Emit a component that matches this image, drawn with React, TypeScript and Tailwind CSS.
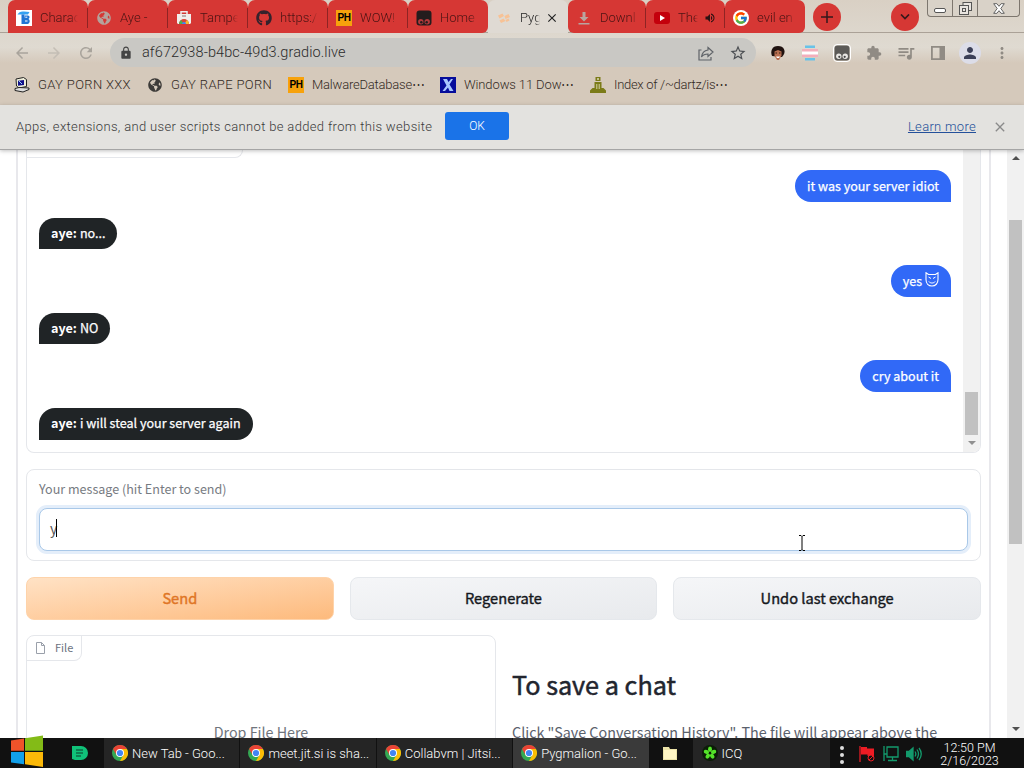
import type { ReactNode } from 'react';
import clsx from 'clsx';
import { FcGoogle } from 'react-icons/fc';
import { FaGithub, FaGlobeAmericas } from 'react-icons/fa';
import {
  MdArrowBack,
  MdArrowForward,
  MdClose,
  MdExtension,
  MdLock,
  MdMoreVert,
  MdPerson,
  MdQueueMusic,
  MdRefresh,
  MdStarBorder,
  MdVolumeUp,
} from 'react-icons/md';

const PhIcon = () => (
  <span className="flex size-4 shrink-0 items-center justify-center bg-[#f7a20c] font-['Liberation_Sans'] text-[10px] leading-none font-bold tracking-[-0.5px] text-black">
    PH
  </span>
);

const CharaIcon = () => (
  <svg className="size-4 shrink-0" viewBox="0 0 16 16">
    <rect width="16" height="16" fill="#fff" />
    <path d="M1.500 4.500C3 2 5 1 8 1.500l5.500.5L12 4.500H4z" fill="#35a2f2" />
    <path d="M5.500 4.500h3V14H5.500zM9 5.500h3c2 .5 2 2.500.5 3.500 2 1 1.500 4.500-1 5H7.500z" fill="#2074d4" />
    <path d="M9.300 7.200h2M9 11h2.500" stroke="#fff" />
  </svg>
);

const StoreIcon = () => (
  <svg className="size-4 shrink-0" viewBox="0 0 16 16">
    <path d="M1 4h14v9l-1 1H2l-1-1z" fill="#f1eeec" />
    <path d="M5 4V1.800h6V4" fill="none" stroke="#eee" strokeWidth="1.500" />
    <path d="M6 6h4" stroke="#a99" strokeWidth="1.500" />
    <path d="M3 14a5 5 0 0 1 10 0z" fill="#db4437" />
    <path d="M3 14a5 5 0 0 1 2-4l3 4z" fill="#4caf50" />
    <path d="M13 14a5 5 0 0 0-2-4l-3 4z" fill="#f5b92b" />
    <path d="M6 14a2 2 0 0 1 4 0z" fill="#4285f4" />
  </svg>
);

const MonkeyIcon = ({ className }: { className?: string }) => (
  <svg className={clsx('size-4 shrink-0', className)} viewBox="0 0 16 16">
    <rect x="0.500" y="0.500" width="15" height="15" rx="3" fill="currentColor" />
    <circle cx="4.800" cy="11.300" r="2.700" fill="#e8e6e2" />
    <circle cx="11.200" cy="11.300" r="2.700" fill="#e8e6e2" />
    <circle cx="5.300" cy="11.800" r="1.100" fill="#444" />
    <circle cx="10.700" cy="11.800" r="1.100" fill="#444" />
  </svg>
);

const HomeIcon = () => (
  <svg className="size-4 shrink-0" viewBox="0 0 16 16">
    <rect x="0.500" y="0.500" width="15" height="15" rx="3" fill="#241c1d" />
    <circle cx="4.800" cy="11.800" r="2.700" fill="#b3393b" />
    <circle cx="11.200" cy="11.800" r="2.700" fill="#b3393b" />
    <circle cx="5.300" cy="12.200" r="1.200" fill="#241c1d" />
    <circle cx="10.700" cy="12.200" r="1.200" fill="#241c1d" />
  </svg>
);

const GradioIcon = () => (
  <svg className="size-4 shrink-0" viewBox="0 0 16 16" fill="#f7c296">
    <path d="M2 5.500 6.500 3.500 8 6 3.500 8.500zM8.500 6 12.500 4 14 7l-4.500 2zM3.500 10.500 7.500 8.500 9.500 11 5 13zM9.500 10l3-1.500 1 2-3 1.500z" />
  </svg>
);

const DownloadIcon = () => (
  <svg className="size-4 shrink-0" viewBox="0 0 16 16" fill="#b9a49f">
    <path d="M6.500 2h3v5h3L8 11.500 3.500 7h3zM2.500 13h11v1.500h-11z" />
  </svg>
);

const YoutubeIcon = () => (
  <svg className="size-4 shrink-0" viewBox="0 0 16 16">
    <rect y="2" width="16" height="12" rx="3" fill="#c4000c" />
    <path d="M6 5v6l5-3z" fill="#fff" />
  </svg>
);

const GoogleBadge = () => (
  <span className="flex size-4 shrink-0 items-center justify-center rounded-full bg-white">
    <FcGoogle className="size-3.5" />
  </span>
);

const PcIcon = () => (
  <svg className="size-4 shrink-0" viewBox="0 0 16 16">
    <path d="M2 2 9.500.5l3 2v7L5 11 2.500 9z" fill="#eeeeda" stroke="#222" />
    <path d="M4 3.800 10 3v5l-6 .8z" fill="#11118a" />
    <path d="m5 4 3 3" stroke="#9cf" />
    <path d="m1 11.500 4-1 10 .5v1.500l-6 2.500-8-1.500z" fill="#ddd" stroke="#222" />
  </svg>
);

const XIcon = () => (
  <svg className="size-4 shrink-0" viewBox="0 0 16 16">
    <rect width="16" height="16" fill="#050c9b" />
    <path d="M3 2h4l1.500 3L11 2h2L9.500 7.500 13.500 14h-4L8 10.500 5 14H2.500L6.500 8.500z" fill="#a6c5ff" />
  </svg>
);

const PeopleIcon = () => (
  <svg className="size-4 shrink-0" viewBox="0 0 16 16" fill="#7b7b18">
    <path d="M5.500 0h5v4h-5zM4.500 5h7v6h-7zM0 16v-2.500L2.500 11h11l2.500 2.500V16z" />
    <path d="M7 1.200h2v1.600H7z" fill="#ddd8b8" />
    <path d="M6.300 7h1v5h-1zM8.700 7h1v5h-1z" fill="#d5d2a4" />
  </svg>
);

const FaceIcon = () => (
  <svg className="size-4 shrink-0" viewBox="0 0 16 16">
    <path d="M2 11C0 6 2 1 8 1s8 5 5.500 9L12 12z" fill="#201310" />
    <path d="M4.500 6.500 8 5l3.500 1.500v4L9 15H7l-2.500-4z" fill="#b86f51" />
    <path d="M6 11.500h4l-1 1.500H7z" fill="#fff" />
    <path d="M5.500 8h1.500m2 0h1.500" stroke="#321" />
  </svg>
);

const FlagIcon = () => (
  <svg className="size-4 shrink-0" viewBox="0 0 16 16">
    <path d="M3 .5h10V3H3zM3 13h10v2.500H3z" fill="#69c2e8" />
    <path d="M0 4h16v3H0zM0 9h16v3H0z" fill="#f3aebb" />
    <path d="M0 6.500h16v3H0z" fill="#fff" />
  </svg>
);

const ShareIcon = () => (
  <svg className="size-4 shrink-0" viewBox="0 0 16 16" fill="none" stroke="#5f6368" strokeWidth="1.200">
    <path d="M3.500 5H1v10h12v-3" />
    <path d="M10 2.500 15 7l-5 4.500V9c-3 0-5 .8-6.500 3C4 8 6.500 5.500 10 5z" />
  </svg>
);

const SidePanelIcon = () => (
  <svg className="size-4 shrink-0" viewBox="0 0 16 16" fill="#908b84">
    <path d="M1 1h14v14H1zm1.800 1.800v10.400H9.500V2.800z" fillRule="evenodd" />
  </svg>
);

const ChromeIcon = () => (
  <svg className="size-4 shrink-0" viewBox="0 0 16 16">
    <circle cx="8" cy="8" r="8" fill="#34a853" />
    <path d="M1.070 4A8 8 0 0 1 14.930 4H8L4.540 10z" fill="#ea4335" />
    <path d="M14.930 4A8 8 0 0 1 8 16l3.460-6L8 4z" fill="#fbbc05" />
    <circle cx="8" cy="8" r="4" fill="#fff" />
    <circle cx="8" cy="8" r="3.100" fill="#4285f4" />
  </svg>
);

const DevilIcon = () => (
  <svg className="-mt-[3px] h-[15px] w-[14px]" viewBox="0 0 14 15" fill="none" stroke="#fff">
    <path d="M1 .8 3.500 2.500h7L13 .8v6.700c0 4-2.500 6.500-6 6.500S1 11.500 1 7.500z" strokeWidth="1.100" />
    <path d="m3.500 5 2.500 1.500M10.500 5 8 6.500M3.800 9.500c1.500 2 5 2 6.400 0" />
  </svg>
);

type Tab = { title: string; icon: ReactNode; active?: boolean; audio?: boolean; width: string };

const tabs: Tab[] = [
  { title: 'Charac', icon: <CharaIcon />, width: 'w-20' },
  { title: 'Aye - ', icon: <FaGlobeAmericas className="size-3.5 shrink-0 text-[#b5a29c]" />, width: 'w-20' },
  { title: 'Tampe', icon: <StoreIcon />, width: 'w-20' },
  { title: 'https:/', icon: <FaGithub className="size-4 shrink-0 text-[#34222c]" />, width: 'w-20' },
  { title: 'WOW!', icon: <PhIcon />, width: 'w-20' },
  { title: 'Home', icon: <HomeIcon />, width: 'w-20' },
  { title: 'Pyg', icon: <GradioIcon />, active: true, width: 'w-20' },
  { title: 'Downl', icon: <DownloadIcon />, width: 'w-[78px]' },
  { title: 'The', icon: <YoutubeIcon />, audio: true, width: 'w-[79px]' },
  { title: 'evil en', icon: <GoogleBadge />, width: 'w-20' },
];

const bookmarks = [
  { title: 'GAY PORN XXX', icon: <PcIcon />, width: 'w-[133px]', tracking: 'tracking-[0.35px]' },
  { title: 'GAY RAPE PORN', icon: <FaGlobeAmericas className="size-3.5 shrink-0 text-[#3d3b39]" />, width: 'w-[141px]', tracking: 'tracking-[0.35px]' },
  { title: 'MalwareDatabase⋯', icon: <PhIcon />, width: 'w-[152px]', tracking: 'tracking-[-0.2px]' },
  { title: 'Windows 11 Dow⋯', icon: <XIcon />, width: 'w-[150px]', tracking: 'tracking-[-0.12px]' },
  { title: 'Index of /~dartz/is⋯', icon: <PeopleIcon />, width: 'w-[150px]', tracking: 'tracking-[-0.3px]' },
];

const messages = [
  { from: 'user', text: 'it was your server idiot' },
  { from: 'aye', text: 'no...' },
  { from: 'user', text: 'yes', devil: true },
  { from: 'aye', text: 'NO' },
  { from: 'user', text: 'cry about it' },
  { from: 'aye', text: 'i will steal your server again' },
];

const tasks = [
  { title: 'New Tab - Goo...', active: false },
  { title: 'meet.jit.si is sha...', active: false },
  { title: 'Collabvm | Jitsi...', active: false },
  { title: 'Pygmalion - Go...', active: true },
];

const TabStrip = () => (
  <div className="relative flex h-[33px] border-b border-[#aaa197] pl-2">
    {tabs.map((tab, i) => (
      <div
        key={tab.title}
        className={clsx(
          'relative flex h-[33px] shrink-0 items-center rounded-t-[7px] pt-0.5 pr-2 pl-2 text-[13px]',
          tab.width,
          tab.active ? 'bg-[#dfdad3] text-[#222]' : 'bg-[#d63734] text-[#4a1414]',
          (i === 5 || i === 9) && 'rounded-br-[6px]',
          i === 7 && 'rounded-bl-[6px]'
        )}
      >
        <span className="flex w-4 shrink-0 justify-center">{tab.icon}</span>
        <span
          className={clsx(
            'ml-2 overflow-hidden mask-r-from-80% whitespace-pre',
            tab.active || tab.audio ? 'w-[20px]' : 'w-[38px]'
          )}
        >
          {tab.title}
        </span>
        {tab.active && <MdClose className="ml-[5px] size-3.5 shrink-0 text-[#222]" />}
        {tab.audio && <MdVolumeUp className="ml-1.5 size-3 shrink-0 text-[#2c1213]" />}
        {![5, 6, 9].includes(i) && <span className="absolute top-2 right-0 h-5 w-px bg-[#8e2424]" />}
      </div>
    ))}
    <button className="mt-[3px] ml-2 flex size-7 items-center justify-center rounded-full bg-[#d63734]">
      <svg className="size-3" viewBox="0 0 12 12" stroke="#35191b" strokeWidth="1.500">
        <path d="M6 0v12M0 6h12" />
      </svg>
    </button>
    <button className="mt-[3px] ml-[50px] flex size-7 items-center justify-center rounded-full bg-[#d63734]">
      <svg className="h-1.5 w-2.5" viewBox="0 0 10 6" fill="none" stroke="#35191b" strokeWidth="1.700">
        <path d="m1 .5 4 4 4-4" />
      </svg>
    </button>
    <div className="ml-[8px] flex h-[17px] w-[93px] rounded-b-[4px] border border-t-0 border-[#7d766e] bg-[#d9d2c8]">
      <span className="flex w-[25px] justify-center border-r border-[#7d766e] pt-2">
        <span className="h-[5px] w-3 rounded-[2px] border border-[#555] bg-white" />
      </span>
      <span className="flex w-[25px] items-center justify-center border-r border-[#7d766e]">
        <svg className="size-[13px]" viewBox="0 0 13 13" fill="#e8e4df" stroke="#555">
          <rect x="4" y="0.500" width="8.500" height="8" />
          <rect x="0.500" y="3.500" width="9" height="9" />
          <rect x="3.500" y="6.500" width="3" height="3" />
        </svg>
      </span>
      <span className="flex flex-1 items-center justify-center">
        <svg className="h-[11px] w-3" viewBox="0 0 12 11" fill="#fff" stroke="#555" strokeWidth="0.900">
          <path d="M.7.7h3.200L6 3.300 8.100.7h3.200L7.800 5.500l3.500 4.800H8.100L6 7.700l-2.100 2.600H.7l3.500-4.800z" />
        </svg>
      </span>
    </div>
  </div>
);

const Toolbar = () => (
  <div className="flex h-[39px] items-center pl-[13px]">
    <MdArrowBack className="size-[18px] text-[#a9a49c]" />
    <MdArrowForward className="ml-[14px] size-[18px] text-[#c4beb5]" />
    <MdRefresh className="ml-[14px] size-[18px] text-[#a9a49c]" />
    <div className="ml-[15px] flex h-[29px] w-[646px] items-center rounded-full bg-[#c9c8c4] pr-[9px] pl-[9px]">
      <MdLock className="size-3.5 text-[#444]" />
      <span className="ml-[9px] text-[14.500px] tracking-[0.1px] text-[#2b2b2b]">af672938-b4bc-49d3.gradio.live</span>
      <span className="ml-auto flex items-center gap-[15px]">
        <ShareIcon />
        <MdStarBorder className="size-[18px] text-[#4c4f53]" />
      </span>
    </div>
    <div className="ml-[14px] flex items-center gap-4">
      <FaceIcon />
      <FlagIcon />
      <span className="-mx-px rounded-[4px] border border-white">
        <MonkeyIcon className="text-[#5c5a57]" />
      </span>
      <MdExtension className="size-4 text-[#908b84]" />
      <MdQueueMusic className="-mx-0.5 size-5 text-[#908b84]" />
      <SidePanelIcon />
      <span className="-mx-[3px] flex size-[22px] items-center justify-center rounded-full bg-[#dcdde8]">
        <MdPerson className="size-[18px] text-[#3c4058]" />
      </span>
      <MdMoreVert className="-mx-px size-[18px] text-[#908b84]" />
    </div>
  </div>
);

const Bookmarks = () => (
  <div className="flex h-[33px] items-center pb-[7px] pl-[14px] text-[13px] text-[#33291f]">
    {bookmarks.map((b) => (
      <div key={b.title} className={clsx('flex shrink-0 items-center whitespace-nowrap', b.width)}>
        <span className="flex w-4 justify-center">{b.icon}</span>
        <span className={clsx('ml-2', b.tracking)}>{b.title}</span>
      </div>
    ))}
  </div>
);

const InfoBar = () => (
  <div className="relative z-10 flex h-[45px] items-center border-b border-[#a5a5a5] bg-[#e3e2df] pl-4 shadow-[0_1px_4px_rgba(0,0,0,0.25)]">
    <span className="w-[429px] text-[13px] tracking-[0.34px] whitespace-nowrap text-[#3a3a3a]">
      Apps, extensions, and user scripts cannot be added from this website
    </span>
    <button className="-mt-0.5 h-7 w-16 rounded-[3px] bg-[#1a73e8] text-[12px] text-white">OK</button>
    <a className="ml-auto text-[13px] tracking-[0.3px] text-[#24509a] underline">Learn more</a>
    <MdClose className="mr-4 ml-4 size-4 text-[#8a8a8a]" />
  </div>
);

const Chat = () => (
  <div className="relative flex h-[303px] rounded-b-[8px] border border-t-0 border-[#e5e7eb] bg-white">
    <span className="absolute top-0 left-0 h-2 w-[216px] rounded-br-[8px] border-r border-b border-[#e5e7eb]" />
    <div className="flex flex-1 flex-col gap-4 pt-[20px] pr-3 pl-3 text-[12.560px]">
      {messages.map((m) => (
        <div
          key={m.text}
          className={clsx(
            'flex h-[31.600px] items-center gap-[3px] rounded-[16px] px-3 leading-none text-white [-webkit-text-stroke:0.25px_white]',
            m.from === 'user' ? 'self-end rounded-br-none bg-[#3169f7]' : 'self-start rounded-bl-none bg-[#202426]'
          )}
        >
          {m.from === 'aye' && <b className="[-webkit-text-stroke:0]">aye:</b>}
          <span>{m.text}</span>
          {m.devil && <DevilIcon />}
        </div>
      ))}
    </div>
    <div className="flex w-[17px] flex-col items-center justify-end rounded-br-[7px] bg-[#f1f1f1]">
      <span className="h-[43px] w-[13px] bg-[#c1c1c1]" />
      <span className="mt-[6px] mb-[7px] border-x-4 border-t-4 border-x-transparent border-t-[#909090]" />
    </div>
  </div>
);

const MessageInput = () => (
  <div className="mt-4 h-[92px] rounded-[8px] border border-[#e5e7eb] bg-white px-3 pt-2.5">
    <div className="h-[18px] text-[12.550px] leading-[18px] text-[#777b82]">Your message (hit Enter to send)</div>
    <div className="mt-2.5 flex h-[43px] items-center rounded-[8px] border border-[#a9c8e8] bg-white px-2.5 pb-[3px] text-[14px] text-[#555] shadow-[0_0_0_3px_#e4eefa]">
      <span>y</span>
      <span className="-ml-px h-[18px] w-px bg-black" />
    </div>
  </div>
);

const Button = ({ label, primary }: { label: string; primary?: boolean }) => (
  <button
    className={clsx(
      'h-[43px] rounded-[8px] border bg-gradient-to-br pb-px text-[14.650px] [-webkit-text-stroke:0.4px_currentColor]',
      primary
        ? 'border-[#fed3aa] from-[#ffe2c5] to-[#fdba7c] text-[#df7626]'
        : 'border-[#e5e8ec] from-[#f5f6f8] to-[#e8eaed] text-[#15181d]'
    )}
  >
    {label}
  </button>
);

const GradioPage = () => (
  <div className="relative flex h-[588px] overflow-hidden bg-white font-['Noto_Sans_CJK_SC',sans-serif] font-normal">
    <div className="ml-4 w-[975px] border-x-2 border-[#e8e8ec] px-2">
      <Chat />
      <MessageInput />
      <div className="mt-4 grid grid-cols-3 gap-4">
        <Button label="Send" primary />
        <Button label="Regenerate" />
        <Button label="Undo last exchange" />
      </div>
      <div className="mt-[15px] flex gap-4">
        <div className="h-[200px] w-[470px] rounded-[8px] border border-[#e5e7eb]">
          <div className="flex h-[25px] w-[55px] items-center gap-[9px] rounded-br-[8px] border-r border-b border-[#e5e7eb] pb-px pl-2 text-[11px] text-[#6b7280]">
            <svg className="h-3 w-[11px]" viewBox="0 0 11 12" fill="none" stroke="#9aa0aa">
              <path d="M1.500.5h5l3 3v8h-8zM6.500.5v3h3" />
            </svg>
            File
          </div>
          <div className="mt-[60px] text-center text-[14.300px] leading-[22px] text-[#70757d]">Drop File Here</div>
        </div>
        <div className="flex-1 pt-[30px]">
          <h1 className="text-[25.200px] leading-[38px] text-[#22252e] [-webkit-text-stroke:0.5px_currentColor]">
            To save a chat
          </h1>
          <p className="mt-[17px] text-[14.330px] leading-[24px] whitespace-nowrap text-[#5a616c]">
            Click "Save Conversation History". The file will appear above the
          </p>
        </div>
      </div>
    </div>
    <div className="ml-auto flex w-[17px] flex-col items-center bg-[#f1f1f1]">
      <span className="mt-[6px] border-x-4 border-b-4 border-x-transparent border-b-[#505050]" />
      <span className="mt-[60px] h-[324px] w-[13px] bg-[#c1c1c1]" />
      <span className="mt-auto mb-[7px] border-x-4 border-t-4 border-x-transparent border-t-[#505050]" />
    </div>
    <svg className="absolute top-[385px] left-[798px] h-4 w-2" viewBox="0 0 8 16" fill="none" stroke="#000">
      <path d="M1 .5h2l1 1 1-1h2M4 1.500v13M1 15.500h2l1-1 1 1h2" />
    </svg>
  </div>
);

const Taskbar = () => (
  <div className="relative flex h-[30px] bg-[#111] text-[13px] text-white">
    <svg className="absolute -top-[3px] left-[10px] h-8 w-[34px]" viewBox="0 0 34 32">
      <path d="M1 5.500 14 3.500v12.300H1z" fill="#f0532a" />
      <path d="M15 3.300 33 .5v15.300H15z" fill="#83bb17" />
      <path d="M1 17h13v12.300L1 27.500z" fill="#12a0ea" />
      <path d="M15 17h18v15l-18-2.700z" fill="#fcb908" />
    </svg>
    <svg className="mt-2 ml-[72px] h-3.5 w-4" viewBox="0 0 16 14">
      <path d="M0 0h9a7 7 0 0 1 0 14H3l-3-1z" fill="#10c279" />
      <path d="M4 4h7M4 7h7M4 10h5" stroke="#0b3d2b" />
    </svg>
    <div className="ml-[15px] flex">
      {tasks.map((task) => (
        <div
          key={task.title}
          className={clsx(
            'flex w-[136.400px] items-center gap-1 border-l border-[#111] pl-2 whitespace-nowrap',
            task.active ? 'bg-[#3a3a3a]' : 'bg-[#252525]'
          )}
        >
          <ChromeIcon />
          <span className="pt-px">{task.title}</span>
        </div>
      ))}
    </div>
    <svg className="mt-2 ml-[14px] h-3.5 w-[15px]" viewBox="0 0 15 14">
      <path d="M0 1h6l1 2h7v11H0z" fill="#ece3a8" />
      <path d="M1 4h12v9H1z" fill="#fff5c4" />
    </svg>
    <div className="ml-[15px] flex w-[137px] items-center gap-1 bg-[#252525] pl-[9px]">
      <svg className="size-4" viewBox="0 0 16 16" fill="#54e329">
        <circle cx="8" cy="8" r="8" fill="#0b1d07" />
        <ellipse cx="8" cy="4.200" rx="2" ry="2.700" />
        <ellipse cx="8" cy="4.200" rx="2" ry="2.700" transform="rotate(72 8 8)" />
        <ellipse cx="8" cy="4.200" rx="2" ry="2.700" transform="rotate(144 8 8)" />
        <ellipse cx="8" cy="4.200" rx="2" ry="2.700" transform="rotate(216 8 8)" />
        <ellipse cx="8" cy="4.200" rx="2" ry="2.700" transform="rotate(288 8 8)" />
      </svg>
      <span className="pt-px">ICQ</span>
    </div>
    <svg className="mt-2 ml-[10px] h-[18px] w-1" viewBox="0 0 4 18" fill="#ddd">
      <circle cx="2" cy="2" r="2" />
      <circle cx="2" cy="9" r="2" />
      <circle cx="2" cy="16" r="2" />
    </svg>
    <svg className="mt-2 ml-[15px] size-4" viewBox="0 0 16 16">
      <path d="M1 0v16" stroke="#c71a22" strokeWidth="1.500" />
      <path d="M2 1h6v1.500h7V10H8.500V8.500H2z" fill="#ed1c24" />
      <circle cx="12" cy="12" r="3" fill="#111" stroke="#ed1c24" />
      <path d="m10 14 4-4" stroke="#ed1c24" />
    </svg>
    <svg className="mt-2 ml-[8px] size-4" viewBox="0 0 16 16" fill="none" stroke="#139a6c" strokeWidth="1.300">
      <path d="M4 1h11v10H4zM9.500 11v3M5 14.500h9M1 0v8h3M1 8v7" />
    </svg>
    <svg className="mt-2 ml-[7px] size-4" viewBox="0 0 16 16" fill="none" stroke="#139a6c" strokeWidth="1.300">
      <path d="M0 5.500h3L7 2v12L3 10.500H0z" fill="#139a6c" />
      <path d="M9 5.500c1 1.500 1 3.500 0 5M11 3.500c2 3 2 6 0 9M13 2c3 4 3 8 0 12" />
    </svg>
    <div className="ml-[18px] w-[60px] pt-[3px] text-center text-[12.500px] leading-[13px] whitespace-nowrap">
      <div>12:50 PM</div>
      <div>2/16/2023</div>
    </div>
  </div>
);

export default function App() {
  return (
    <div className="flex h-[768px] w-[1024px] flex-col overflow-hidden bg-white font-['Roboto',sans-serif] font-light">
      <div className="bg-linear-to-b from-[#d9d0c4] from-0% via-[#dfdad1] via-45% to-[#d5c9bb] to-60%">
        <TabStrip />
        <Toolbar />
        <Bookmarks />
      </div>
      <InfoBar />
      <GradioPage />
      <Taskbar />
    </div>
  );
}
